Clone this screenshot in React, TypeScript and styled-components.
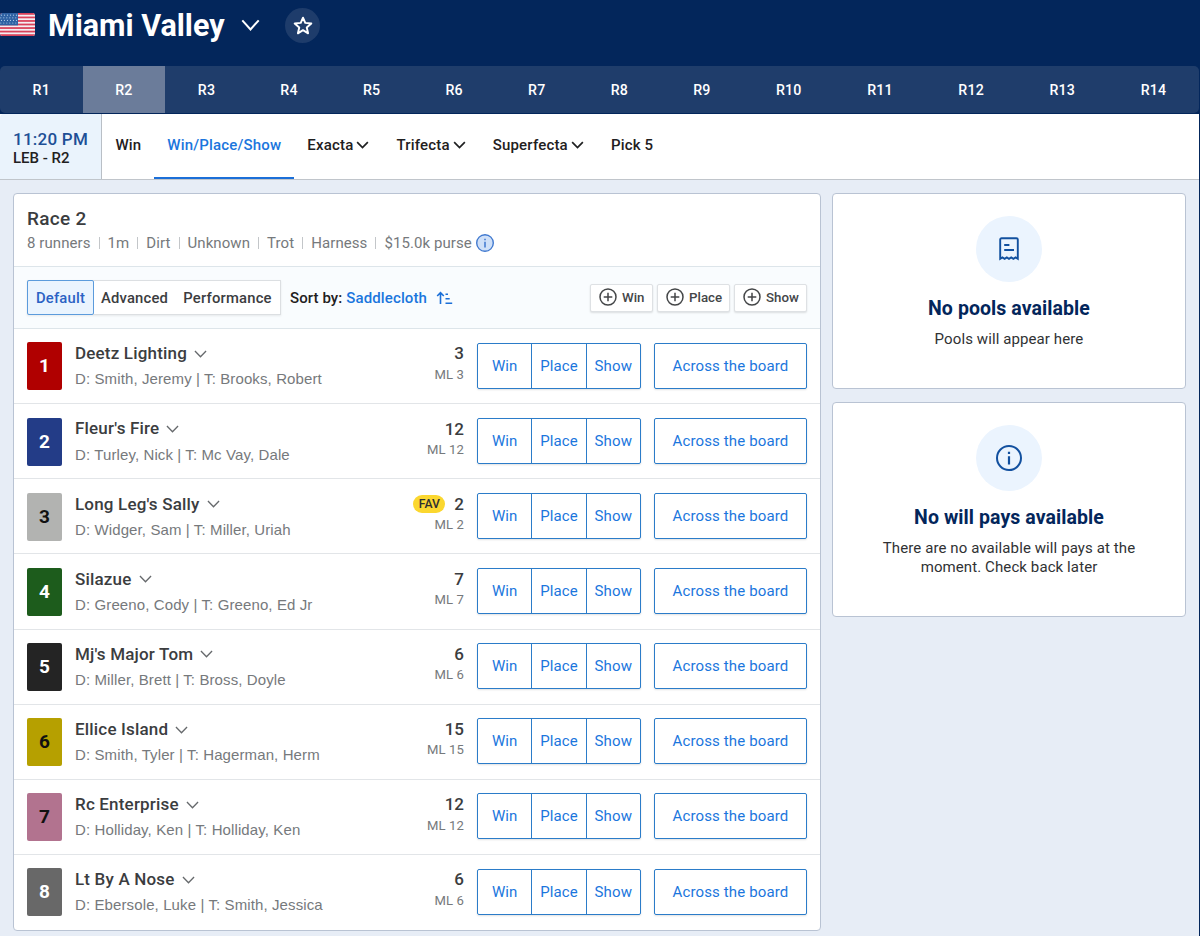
import React from "react";
import styled, { createGlobalStyle } from "styled-components";

const GlobalStyle = createGlobalStyle`
  *, *::before, *::after { box-sizing: border-box; }
  html, body { margin: 0; padding: 0; }
  body {
    background: #03265b;
    font-family: Roboto, "Liberation Sans", sans-serif;
    color: #1f2021;
    overflow: hidden;
  }
  button {
    font-family: inherit;
    margin: 0;
    padding: 0;
    border: 0;
    background: none;
    color: inherit;
    white-space: nowrap;
  }
  svg { display: block; flex: none; }
`;

const Page = styled.div`
  width: 1199px;
  height: 936px;
  display: flex;
  flex-direction: column;
  background: #e7edf6;
  overflow: hidden;
`;

/* ---------- header ---------- */

const Header = styled.header`
  height: 66px;
  flex: none;
  display: flex;
  align-items: flex-start;
  background: #03265b;
  color: #fff;
`;

const FlagWrap = styled.div`
  margin-top: 13px;
`;

const TrackName = styled.h1`
  margin: 8px 0 0 13px;
  font-size: 30.5px;
  line-height: 36px;
  font-weight: 700;
  width: 178px;
  white-space: nowrap;
`;

const TrackToggle = styled.button`
  margin: 19px 0 0 15px;
`;

const FavoriteButton = styled.button`
  width: 35px;
  height: 35px;
  margin: 8px 0 0 25px;
  border-radius: 50%;
  background: #1e3c6b;
  display: flex;
  align-items: center;
  justify-content: center;
`;

const RaceNav = styled.nav`
  height: 48px;
  flex: none;
  display: flex;
  background: #03265b;
  padding-bottom: 1px;
`;

const RaceStrip = styled.div`
  flex: 1;
  display: flex;
  background: #1f3d6b;
  border-radius: 5px;
`;

const RaceTab = styled.button<{ $active?: boolean; $wide?: boolean }>`
  flex: ${(p) => (p.$wide ? 91.2 : 82.6)} 0 0;
  padding-top: 1px;
  color: #fff;
  font-size: 14.2px;
  font-weight: 500;
  letter-spacing: 0.2px;
  line-height: 46px;
  background: ${(p) => (p.$active ? "#6b7c9a" : "transparent")};
`;

/* ---------- bet type bar ---------- */

const BetBar = styled.div`
  height: 66px;
  flex: none;
  display: flex;
  background: #fff;
  border-bottom: 1px solid #c0c5cb;
`;

const PostTime = styled.div`
  width: 102px;
  margin-right: 0.4px;
  padding: 15px 0 0 13px;
  background: #eaf3fc;
  border-right: 1px solid #b9bfc6;
  border-top-left-radius: 4px;
`;

const Clock = styled.div`
  font-size: 17px;
  letter-spacing: 0.25px;
  line-height: 20px;
  font-weight: 500;
  color: #1d4f96;
  white-space: nowrap;
`;

const NextTrack = styled.div`
  font-size: 15px;
  line-height: 19px;
  font-weight: 500;
  color: #1f2021;
  white-space: nowrap;
`;

const BetTab = styled.button<{ $active?: boolean }>`
  height: 65px;
  padding: 0 13px 3px;
  display: flex;
  align-items: center;
  gap: 3px;
  font-size: 15px;
  letter-spacing: 0.18px;
  font-weight: 500;
  color: ${(p) => (p.$active ? "#1b76dd" : "#1f2021")};
  box-shadow: ${(p) => (p.$active ? "inset 0 -2px 0 #1b6fd8" : "none")};
  svg { margin-right: 1px; }
`;

/* ---------- content ---------- */

const Content = styled.main`
  padding: 13px 13px 0;
  display: grid;
  grid-template-columns: 808px 354px;
  column-gap: 11px;
  align-items: start;
`;

const Card = styled.section`
  background: #fff;
  border: 1px solid #b9c3d3;
  border-radius: 4px;
`;

const RaceHeader = styled.div`
  height: 73px;
  padding: 13px 13px 0;
  border-bottom: 1px solid #dde5ea;
`;

const RaceTitle = styled.h2`
  margin: 0;
  font-size: 19px;
  letter-spacing: 0.3px;
  line-height: 24px;
  font-weight: 500;
  color: #3b3d3f;
`;

const RaceFacts = styled.div`
  display: flex;
  align-items: center;
  height: 24px;
  font-size: 15px;
  letter-spacing: 0.08px;
  color: #76797c;
  white-space: nowrap;
`;

const FactDivider = styled.i`
  width: 1px;
  height: 12px;
  margin: 0 8px;
  background: #c3c6c9;
`;

const FactInfo = styled.span`
  margin-left: 4px;
`;

const Toolbar = styled.div`
  height: 62px;
  padding: 0 13px;
  display: flex;
  align-items: center;
  background: #f9fcfe;
  border-bottom: 1px solid #dde5ea;
`;

const ViewSwitch = styled.div`
  display: flex;
  height: 35px;
  width: 254px;
  background: #fff;
  border: 1px solid #dcdfe2;
  border-left: 0;
  box-shadow: 0 1px 2px rgba(0, 0, 0, 0.08);
`;

const ViewOption = styled.button<{ $width: number; $active?: boolean }>`
  width: ${(p) => p.$width}px;
  font-size: 14.8px;
  letter-spacing: 0.2px;
  font-weight: 500;
  color: ${(p) => (p.$active ? "#2a62c4" : "#3b3d3f")};
  background: ${(p) => (p.$active ? "#eaf4fe" : "transparent")};
  border: ${(p) => (p.$active ? "1px solid #5b9bdc" : "0")};
  border-radius: 2px;
  margin: ${(p) => (p.$active ? "-1px 0" : "0")};
`;

const SortLabel = styled.div`
  display: flex;
  align-items: center;
  margin-left: 9px;
  font-size: 15px;
  letter-spacing: 0.08px;
  font-weight: 500;
  white-space: nowrap;
`;

const SortValue = styled.span`
  margin: 0 9px 0 4px;
  letter-spacing: 0.12px;
  color: #1b76dd;
`;

const AddGroup = styled.div`
  display: flex;
  gap: 4px;
  margin-left: auto;
`;

const AddButton = styled.button<{ $width: number }>`
  width: ${(p) => p.$width}px;
  height: 28px;
  padding: 0 0 1px 8px;
  display: flex;
  align-items: center;
  gap: 5px;
  font-size: 13.3px;
  font-weight: 500;
  color: #444648;
  background: #fff;
  border: 1px solid #dee1e4;
  border-radius: 2px;
  box-shadow: 0 1px 2px rgba(0, 0, 0, 0.12);
`;

const RunnerRow = styled.div`
  height: 75.15px;
  padding: 13.6px 13px 0;
  display: flex;
  border-bottom: 1px solid #e2e5e8;
  &:last-child { border-bottom: 0; }
`;

const Saddlecloth = styled.div<{ $bg: string; $fg: string }>`
  width: 35px;
  height: 48px;
  margin-top: -0.2px;
  flex: none;
  border-radius: 2px;
  background: ${(p) => p.$bg};
  color: ${(p) => p.$fg};
  font-size: 19px;
  line-height: 48px;
  font-weight: 700;
  text-align: center;
`;

const RunnerInfo = styled.div`
  flex: 1;
  margin: -0.3px 0 0 13px;
`;

const RunnerName = styled.div`
  display: flex;
  align-items: center;
  gap: 7px;
  height: 22px;
  font-size: 17px;
  letter-spacing: 0.18px;
  font-weight: 500;
  color: #3b3d3f;
  white-space: nowrap;
  svg { margin-top: 1px; color: #66696c; }
`;

const Connections = styled.div`
  margin-top: 4.1px;
  font-family: "Liberation Sans", Arial, sans-serif;
  font-size: 15px;
  letter-spacing: 0.11px;
  line-height: 21px;
  color: #76797c;
  white-space: nowrap;
`;

const Odds = styled.div`
  width: 80px;
  margin: -0.3px 13px 0 0;
  text-align: right;
`;

const CurrentOdds = styled.div`
  display: flex;
  justify-content: flex-end;
  align-items: center;
  height: 22.4px;
  font-size: 17px;
  line-height: 20px;
  font-weight: 500;
  color: #3b3d3f;
`;

const FavoriteTag = styled.span`
  width: 32px;
  height: 18px;
  margin-right: 9px;
  border-radius: 9px;
  background: #fbd72f;
  font-size: 12.2px;
  line-height: 18.5px;
  font-weight: 500;
  color: #2f3032;
  text-align: center;
`;

const MorningLine = styled.div`
  font-size: 13.1px;
  line-height: 19px;
  letter-spacing: 0.1px;
  color: #76797c;
`;

const WagerGroup = styled.div`
  display: flex;
  width: 164px;
  height: 46px;
  border: 1px solid #2b7cc9;
  border-radius: 2px;
  box-shadow: 0 1px 2px rgba(0, 0, 0, 0.12);
`;

const WagerButton = styled.button`
  flex: 1 0 0;
  font-size: 15px;
  letter-spacing: 0.1px;
  color: #1b76dd;
  & + & { border-left: 1px solid #2b7cc9; }
`;

const BoardButton = styled.button`
  width: 153px;
  height: 46px;
  margin-left: 13px;
  border: 1px solid #2b7cc9;
  border-radius: 2px;
  box-shadow: 0 1px 2px rgba(0, 0, 0, 0.12);
  font-size: 15px;
  letter-spacing: 0.13px;
  color: #1b76dd;
`;

/* ---------- side column ---------- */

const Side = styled.aside`
  display: flex;
  flex-direction: column;
  gap: 13px;
`;

const EmptyCard = styled(Card)<{ $height: number }>`
  height: ${(p) => p.$height}px;
  padding-top: 22px;
  display: flex;
  flex-direction: column;
  align-items: center;
  text-align: center;
`;

const EmptyIcon = styled.div`
  width: 66px;
  height: 66px;
  border-radius: 50%;
  background: #ebf4fe;
  display: flex;
  align-items: center;
  justify-content: center;
`;

const EmptyTitle = styled.h3`
  margin: 14px 0 0;
  font-size: 19.5px;
  letter-spacing: 0.08px;
  line-height: 26px;
  font-weight: 700;
  color: #03265b;
`;

const EmptyText = styled.p`
  margin: 8px 0 0;
  width: 270px;
  font-size: 15px;
  letter-spacing: 0.1px;
  line-height: 19px;
  color: #303234;
`;

/* ---------- icons ---------- */

function Flag() {
  const stripe = 23 / 13;
  return (
    <svg width="35" height="23" viewBox="0 0 35 23">
      <defs>
        <clipPath id="flag-clip">
          <rect width="35" height="23" rx="2.5" />
        </clipPath>
      </defs>
      <g clipPath="url(#flag-clip)">
        <rect width="35" height="23" fill="#f4eef2" />
        {[0, 2, 4, 6, 8, 10, 12].map((n) => (
          <rect key={n} y={n * stripe} width="35" height={stripe} fill="#d9415a" />
        ))}
        <rect width="18" height={stripe * 7} fill="#2f62a3" />
        {[1.6, 4.2, 6.8, 9.4].map((y, r) =>
          [1.5, 4.5, 7.5, 10.5, 13.5, 16.5].map((x) => (
            <circle key={`${x}-${y}`} cx={x + (r % 2 ? -0.7 : 0)} cy={y + 0.6} r="0.6" fill="#a9c6e4" />
          ))
        )}
      </g>
    </svg>
  );
}

function Chevron({ w, h, stroke }: { w: number; h: number; stroke: number }) {
  const p = stroke / 2 + 0.3;
  return (
    <svg width={w} height={h} viewBox={`0 0 ${w} ${h}`} fill="none" stroke="currentColor" strokeWidth={stroke}>
      <path d={`M${p} ${p} L${w / 2} ${h - p - 0.3} L${w - p} ${p}`} />
    </svg>
  );
}

function Star() {
  return (
    <svg width="20" height="20" viewBox="0 0 24 24" fill="none" stroke="#fff" strokeWidth="2.3" strokeLinejoin="round">
      <path d="M12 2 L14.7 8.3 L22 9 L16.5 13.7 L18.1 20.8 L12 17 L5.9 20.8 L7.5 13.7 L2 9 L9.3 8.3 Z" />
    </svg>
  );
}

function Info({ size, stroke, fill = "none", color }: { size: number; stroke: number; fill?: string; color: string }) {
  return (
    <svg width={size} height={size} viewBox="0 0 26 26">
      <circle cx="13" cy="13" r={13 - stroke / 2} fill={fill} stroke={color} strokeWidth={stroke} />
      <path d="M11.9 11.2h2.2v8.2h-2.2zM11.9 6.8h2.2v2.3h-2.2z" fill={color} />
    </svg>
  );
}

function SortIcon() {
  return (
    <svg width="17" height="14" viewBox="0 0 17 14" fill="none" stroke="#1b6fd8">
      <path d="M4.5 13V2M1.2 5L4.5 1.7L7.8 5" strokeWidth="1.6" />
      <path d="M9.5 3.2h2.5M9.5 7.7h4.2M9.5 12.2h6.7" strokeWidth="1.5" />
    </svg>
  );
}

function PlusCircle() {
  return (
    <svg width="18" height="18" viewBox="0 0 18 18" fill="none" stroke="#444648" strokeWidth="1.5">
      <circle cx="9" cy="9" r="8" />
      <path d="M9 4.7v8.6M4.7 9h8.6" />
    </svg>
  );
}

function Receipt() {
  return (
    <svg width="20" height="24" viewBox="0 0 20 24" fill="none" stroke="#12509f" strokeWidth="1.9">
      <path d="M1.2 21.8V2.6Q1.2 1.2 2.6 1.2H17.4Q18.8 1.2 18.8 2.6V21.8L16.6 20.4L14.4 21.9L12.2 20.4L10 21.9L7.8 20.4L5.6 21.9L3.4 20.4Z" />
      <path d="M5.2 8H10.4M5.2 13H15" />
    </svg>
  );
}

/* ---------- data ---------- */

const races = Array.from({ length: 14 }, (_, i) => i + 1);

const bets = [
  { label: "Win" },
  { label: "Win/Place/Show", active: true },
  { label: "Exacta", menu: true },
  { label: "Trifecta", menu: true },
  { label: "Superfecta", menu: true },
  { label: "Pick 5" },
];

const facts = ["8 runners", "1m", "Dirt", "Unknown", "Trot", "Harness", "$15.0k purse"];

const runners = [
  { name: "Deetz Lighting", people: "D: Smith, Jeremy | T: Brooks, Robert", odds: 3, bg: "#b00000", fg: "#fff" },
  { name: "Fleur's Fire", people: "D: Turley, Nick | T: Mc Vay, Dale", odds: 12, bg: "#233c87", fg: "#fff" },
  { name: "Long Leg's Sally", people: "D: Widger, Sam | T: Miller, Uriah", odds: 2, bg: "#b2b3b1", fg: "#111", fav: true },
  { name: "Silazue", people: "D: Greeno, Cody | T: Greeno, Ed Jr", odds: 7, bg: "#1d5c1c", fg: "#fff" },
  { name: "Mj's Major Tom", people: "D: Miller, Brett | T: Bross, Doyle", odds: 6, bg: "#242424", fg: "#fff" },
  { name: "Ellice Island", people: "D: Smith, Tyler | T: Hagerman, Herm", odds: 15, bg: "#b6a000", fg: "#111" },
  { name: "Rc Enterprise", people: "D: Holliday, Ken | T: Holliday, Ken", odds: 12, bg: "#b2738f", fg: "#111" },
  { name: "Lt By A Nose", people: "D: Ebersole, Luke | T: Smith, Jessica", odds: 6, bg: "#686868", fg: "#fff" },
];

export default function App() {
  return (
    <>
      <GlobalStyle />
      <Page>
        <Header>
          <FlagWrap><Flag /></FlagWrap>
          <TrackName>Miami Valley</TrackName>
          <TrackToggle><Chevron w={19} h={12} stroke={2} /></TrackToggle>
          <FavoriteButton><Star /></FavoriteButton>
        </Header>
        <RaceNav>
          <RaceStrip>
            {races.map((n) => (
              <RaceTab key={n} $active={n === 2} $wide={n > 9}>R{n}</RaceTab>
            ))}
          </RaceStrip>
        </RaceNav>
        <BetBar>
          <PostTime>
            <Clock>11:20 PM</Clock>
            <NextTrack>LEB - R2</NextTrack>
          </PostTime>
          {bets.map((b) => (
            <BetTab key={b.label} $active={b.active}>
              {b.label}
              {b.menu && <Chevron w={13} h={8} stroke={1.7} />}
            </BetTab>
          ))}
        </BetBar>
        <Content>
          <Card>
            <RaceHeader>
              <RaceTitle>Race 2</RaceTitle>
              <RaceFacts>
                {facts.map((f, i) => (
                  <React.Fragment key={f}>
                    {i > 0 && <FactDivider />}
                    <span>{f}</span>
                  </React.Fragment>
                ))}
                <FactInfo>
                  <Info size={18} stroke={2} fill="#cfe0f8" color="#3f78cf" />
                </FactInfo>
              </RaceFacts>
            </RaceHeader>
            <Toolbar>
              <ViewSwitch>
                <ViewOption $width={67} $active>Default</ViewOption>
                <ViewOption $width={81}>Advanced</ViewOption>
                <ViewOption $width={105}>Performance</ViewOption>
              </ViewSwitch>
              <SortLabel>
                Sort by: <SortValue>Saddlecloth</SortValue>
                <SortIcon />
              </SortLabel>
              <AddGroup>
                <AddButton $width={63}><PlusCircle />Win</AddButton>
                <AddButton $width={73}><PlusCircle />Place</AddButton>
                <AddButton $width={73}><PlusCircle />Show</AddButton>
              </AddGroup>
            </Toolbar>
            {runners.map((r, i) => (
              <RunnerRow key={r.name}>
                <Saddlecloth $bg={r.bg} $fg={r.fg}>{i + 1}</Saddlecloth>
                <RunnerInfo>
                  <RunnerName>
                    {r.name}
                    <Chevron w={13} h={8} stroke={1.3} />
                  </RunnerName>
                  <Connections>{r.people}</Connections>
                </RunnerInfo>
                <Odds>
                  <CurrentOdds>
                    {r.fav && <FavoriteTag>FAV</FavoriteTag>}
                    {r.odds}
                  </CurrentOdds>
                  <MorningLine>ML {r.odds}</MorningLine>
                </Odds>
                <WagerGroup>
                  <WagerButton>Win</WagerButton>
                  <WagerButton>Place</WagerButton>
                  <WagerButton>Show</WagerButton>
                </WagerGroup>
                <BoardButton>Across the board</BoardButton>
              </RunnerRow>
            ))}
          </Card>
          <Side>
            <EmptyCard $height={196}>
              <EmptyIcon><Receipt /></EmptyIcon>
              <EmptyTitle>No pools available</EmptyTitle>
              <EmptyText>Pools will appear here</EmptyText>
            </EmptyCard>
            <EmptyCard $height={215}>
              <EmptyIcon><Info size={26} stroke={2} color="#12509f" /></EmptyIcon>
              <EmptyTitle>No will pays available</EmptyTitle>
              <EmptyText>There are no available will pays at the moment. Check back later</EmptyText>
            </EmptyCard>
          </Side>
        </Content>
      </Page>
    </>
  );
}
